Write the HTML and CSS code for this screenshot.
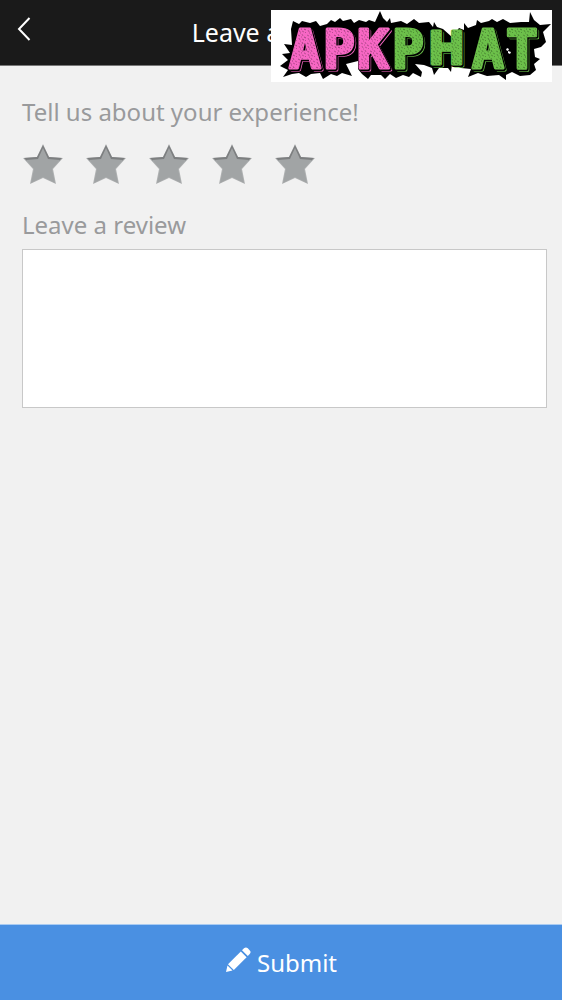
FILE: index.html
```
<!DOCTYPE html>
<html lang="en">
<head>
    <meta charset="UTF-8">
    <meta name="viewport" content="width=device-width, initial-scale=1.0">
    <title>Leave a Review</title>
    <link rel="stylesheet" href="styles.css">
</head>
<body>

<header class="top-bar">
    <button class="back-btn" type="button" aria-label="Back">
        <svg width="14" height="24" viewBox="0 0 14 24"><path d="M12.5 1 L2 12 L12.5 23"/></svg>
    </button>
    <h1>Leave a Review</h1>
</header>

<svg class="logo" viewBox="0 0 281 72" role="img" aria-label="APKPHAT">
    <defs>
        <pattern id="flecks" width="9" height="8" patternUnits="userSpaceOnUse">
            <path d="M0 1l2 1M4 0l1 2M6 3l2 1M1 4l1 2M4 5l2 1M7 7l1-1M3 3l1 0M2 7l1 0" stroke="#000" stroke-width="0.6"/>
        </pattern>
    </defs>
    <path class="splat" d="M20 19 L22 11 L28 14 L31 11 L39 13 L45 11 L49 16 L56 14 L60 10 L64 12 L69 8 L72 11 L80 9 L83 13 L88 10 L95 12 L98 10 L104 12 L109 1 L112 8 L116 12 L119 8 L120 13 L130 11 L136 14 L143 9 L148 13 L158 12 L162 17 L163 12 L166 17 L172 19 L181 27 L188 18 L193 20 L193 13 L197 18 L205 15 L206 10 L210 13 L218 11 L221 9 L226 12 L232 9 L239 13 L250 12 L258 12 L259 2 L263 10 L269 15 L280 14 L272 22 L275 32 L270 37 L263 39 L264 47 L269 49 L263 54 L265 60 L259 65 L249 66 L241 62 L235 65 L235 70 L228 65 L216 66 L207 63 L197 67 L200 59 L190 58 L181 54 L180 62 L177 58 L168 58 L163 65 L161 58 L153 55 L144 54 L151 62 L150 67 L142 63 L138 67 L132 65 L125 68 L119 64 L114 69 L110 65 L100 65 L97 69 L91 64 L87 59 L87 51 L75 54 L81 66 L71 63 L66 66 L60 64 L52 69 L49 63 L40 64 L35 67 L28 63 L21 64 L12 67 L17 60 L9 56 L17 50 L11 44 L19 43 L13 34 L21 35 Z"/>
    <path class="gap" d="M236 38l2 1-1 2-2-1zM237 41l3 1-1 2-2-1z"/>
    <use href="#apk" class="pink edge"/>
    <use href="#apk" class="line"/>
    <g class="pink"><text id="apk"><tspan x="18" y="58">A</tspan><tspan x="52" y="58">P</tspan><tspan x="86" y="58">K</tspan></text></g>
    <use href="#apk" class="flecks"/>
    <use href="#phat" class="green edge"/>
    <use href="#phat" class="line"/>
    <g class="green"><text id="phat"><tspan x="121" y="58">P</tspan><tspan class="wide" x="157" y="54">H</tspan><tspan x="201" y="58">A</tspan><tspan x="235" y="58">T</tspan></text></g>
    <use href="#phat" class="flecks"/>
</svg>

<form class="review-form">
    <fieldset class="rating">
        <legend>Tell us about your experience!</legend>
        <div class="stars" id="stars"></div>
    </fieldset>
    <label class="review-label" for="review">Leave a review</label>
    <textarea class="review-box" id="review" name="review"></textarea>
    <button class="submit-btn" type="submit">
        <svg width="26" height="26" viewBox="0 0 26 26">
            <path d="M1 25 L2.5 18.5 L7.5 23.5 Z"/>
            <path d="M3 17.2 L15.8 4.4 L21.6 10.2 L8.8 23 Z"/>
            <path d="M17 3.2 L19 1.3 Q21 -0.4 22.8 1.3 L24.8 3.4 Q26.4 5 24.7 7 L22.8 9 Z"/>
        </svg>
        <span>Submit</span>
    </button>
</form>

<script>
    const stars = document.getElementById('stars');

    // Build the five star radios
    for (let i = 1; i <= 5; i++) {
        const label = document.createElement('label');
        label.classList.add('star');
        label.innerHTML = `
            <input type="radio" name="rating" value="${i}" aria-label="${i} out of 5">
            <svg viewBox="0 0 40 40">
                <path class="star-edge" d="M20 0 L26 13 L40 14 L30 25 L33 40 L20 34 L7 40 L10 25 L0 14 L14 13 Z"/>
                <path class="star-shade" d="M20 1 L26 13 L39 14 L36 17 L4 17 L1 14 L14 13 Z"/>
                <path class="star-face" d="M20 4 L25 15 L37 16 L29 25 L32 39 L20 33 L8 39 L11 25 L3 16 L15 15 Z"/>
            </svg>`;
        stars.appendChild(label);
    }
</script>

</body>
</html>
```
FILE: styles.css
```
* {
    box-sizing: border-box;
}

body {
    background-color: #f1f1f1;
    margin: 0;
    display: flex;
    flex-direction: column;
    min-height: 100vh;
    position: relative;
    font-family: "Noto Sans", "Open Sans", sans-serif;
    font-size: 24px;
    line-height: 32px;
    color: #999a9c;
}

.top-bar {
    background-color: #1a1a1a;
    border-bottom: 1px solid #777;
    color: white;
    display: grid;
    grid-template-columns: 48px 1fr 50px;
    align-items: center;
    height: 66px;
}

.top-bar h1 {
    margin: 0;
    padding-bottom: 2px;
    font-size: 25px;
    font-weight: 400;
    text-align: center;
}

.back-btn {
    background: none;
    border: none;
    padding: 0 0 8px 17px;
    text-align: left;
    line-height: 0;
    cursor: pointer;
}

.back-btn path {
    fill: none;
    stroke: white;
    stroke-width: 2;
}

/* logo badge sits over the header */
.logo {
    position: absolute;
    top: 10px;
    right: 10px;
    width: 281px;
    height: 72px;
    background: white;
    font-family: "DejaVu Sans Mono", monospace;
    font-size: 53px;
    font-weight: 700;
    stroke-linejoin: round;
}

.logo .gap {
    fill: white;
}

.logo .wide {
    font-family: "DejaVu Sans", sans-serif;
    font-size: 44px;
}

.pink {
    fill: #f767c4;
    stroke: #f767c4;
    stroke-width: 3;
}

.green {
    fill: #6cc04a;
    stroke: #6cc04a;
    stroke-width: 3;
}

.edge {
    transform: translate(2px, 2px);
}

.line {
    fill: black;
    stroke: black;
    stroke-width: 4;
    transform: translate(1px, 1px);
}

.flecks {
    fill: url(#flecks);
    stroke: url(#flecks);
    stroke-width: 2;
    opacity: 0.4;
}

.review-form {
    flex: 1;
    display: flex;
    flex-direction: column;
    padding: 30px 15px 0 22px;
}

.rating {
    border: none;
    margin: 0;
    padding: 0;
}

.rating legend {
    padding: 0;
}

.stars {
    display: flex;
    gap: 23px;
    padding: 16px 0 25px 1px;
}

.star {
    width: 40px;
    height: 40px;
    cursor: pointer;
}

.star input {
    appearance: none;
    position: absolute;
    margin: 0;
}

.star svg {
    display: block;
}

.star-edge {
    fill: #b0b2b3;
}

.star-shade {
    fill: #7d7f80;
}

.star-face {
    fill: #a1a4a5;
}

.review-label {
    margin-bottom: 8px;
}

.review-box {
    width: 100%;
    height: 159px;
    padding: 12px;
    border: 1px solid #c8c8c8;
    background: white;
    font: inherit;
    resize: none;
}

.submit-btn {
    margin: auto -15px 0 -22px;
    height: 76px;
    border: none;
    border-top: 1px solid #a9cbf2;
    background-color: #4a90e2;
    color: white;
    font: inherit;
    display: flex;
    justify-content: center;
    align-items: center;
    gap: 6px;
    cursor: pointer;
}

.submit-btn svg {
    fill: white;
    margin-bottom: 6px;
}
```
